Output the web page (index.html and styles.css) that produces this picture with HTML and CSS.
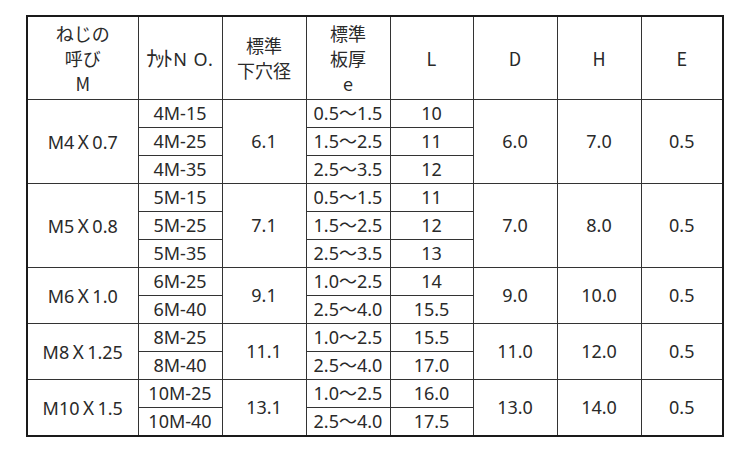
FILE: index.html
```html
<!DOCTYPE html>
<html lang="ja">
<head>
<meta charset="utf-8">
<link rel="stylesheet" href="styles.css">
</head>
<body>
<table class="spec">
  <colgroup>
    <col class="c1"><col class="c2"><col class="c3"><col class="c4"><col class="c5"><col class="c6"><col class="c7"><col class="c8">
  </colgroup>
  <thead>
    <tr class="head">
      <th>ねじの<br>呼び<br>M</th>
      <th><span class="hw">ﾅｯﾄ</span><span class="no">N O.</span></th>
      <th>標準<br>下穴径</th>
      <th>標準<br>板厚<br>e</th>
      <th>L</th>
      <th>D</th>
      <th>H</th>
      <th>E</th>
    </tr>
  </thead>
  <tbody>
    <tr class="group-start">
      <td rowspan="3">M4<span class="x">Ｘ</span>0.7</td>
      <td>4M-15</td>
      <td rowspan="3">6.1</td>
      <td>0.5～1.5</td>
      <td>10</td>
      <td rowspan="3">6.0</td>
      <td rowspan="3">7.0</td>
      <td rowspan="3">0.5</td>
    </tr>
    <tr><td>4M-25</td><td>1.5～2.5</td><td>11</td></tr>
    <tr><td>4M-35</td><td>2.5～3.5</td><td>12</td></tr>

    <tr class="group-start">
      <td rowspan="3">M5<span class="x">Ｘ</span>0.8</td>
      <td>5M-15</td>
      <td rowspan="3">7.1</td>
      <td>0.5～1.5</td>
      <td>11</td>
      <td rowspan="3">7.0</td>
      <td rowspan="3">8.0</td>
      <td rowspan="3">0.5</td>
    </tr>
    <tr><td>5M-25</td><td>1.5～2.5</td><td>12</td></tr>
    <tr><td>5M-35</td><td>2.5～3.5</td><td>13</td></tr>

    <tr class="group-start">
      <td rowspan="2">M6<span class="x">Ｘ</span>1.0</td>
      <td>6M-25</td>
      <td rowspan="2">9.1</td>
      <td>1.0～2.5</td>
      <td>14</td>
      <td rowspan="2">9.0</td>
      <td rowspan="2">10.0</td>
      <td rowspan="2">0.5</td>
    </tr>
    <tr><td>6M-40</td><td>2.5～4.0</td><td>15.5</td></tr>

    <tr class="group-start">
      <td rowspan="2">M8<span class="x">Ｘ</span>1.25</td>
      <td>8M-25</td>
      <td rowspan="2">11.1</td>
      <td>1.0～2.5</td>
      <td>15.5</td>
      <td rowspan="2">11.0</td>
      <td rowspan="2">12.0</td>
      <td rowspan="2">0.5</td>
    </tr>
    <tr><td>8M-40</td><td>2.5～4.0</td><td>17.0</td></tr>

    <tr class="group-start">
      <td rowspan="2">M10<span class="x">Ｘ</span>1.5</td>
      <td>10M-25</td>
      <td rowspan="2">13.1</td>
      <td>1.0～2.5</td>
      <td>16.0</td>
      <td rowspan="2">13.0</td>
      <td rowspan="2">14.0</td>
      <td rowspan="2">0.5</td>
    </tr>
    <tr><td>10M-40</td><td>2.5～4.0</td><td>17.5</td></tr>
  </tbody>
</table>
</body>
</html>
```
FILE: styles.css
```css
html, body {
  margin: 0;
  padding: 0;
  background: #ffffff;
}
body {
  padding: 15px 0 0 26px;
  font-family: "Noto Sans", "Noto Sans CJK JP", sans-serif;
  color: #2a2a2a;
}
.spec {
  border-collapse: collapse;
  table-layout: fixed;
  width: 698px;
  border: 2px solid #1a1a1a;
  font-size: 18px;
}
.c1 { width: 111px; }
.c2 { width: 84px; }
.c3 { width: 84px; }
.c4 { width: 84px; }
.c5 { width: 83px; }
.c6 { width: 84px; }
.c7 { width: 84px; }
.c8 { width: 82px; }
.spec th, .spec td {
  border: 1px solid #333;
  padding: 0;
  text-align: center;
  vertical-align: middle;
  font-weight: normal;
  white-space: nowrap;
}
.spec th {
  height: 82px;
  line-height: 25px;
  font-family: "Noto Sans CJK JP", "Noto Sans", sans-serif;
}
.spec td {
  height: 27px;
  line-height: 27px;
}
.hw {
  font-family: "Noto Sans CJK JP", sans-serif;
  font-size: 22px;
  letter-spacing: -3px;
  margin-right: 3px;
}
.no {
  font-family: "Noto Sans", sans-serif;
  letter-spacing: 1px;
}
.x {
  font-family: "Noto Sans CJK JP", sans-serif;
}
```
